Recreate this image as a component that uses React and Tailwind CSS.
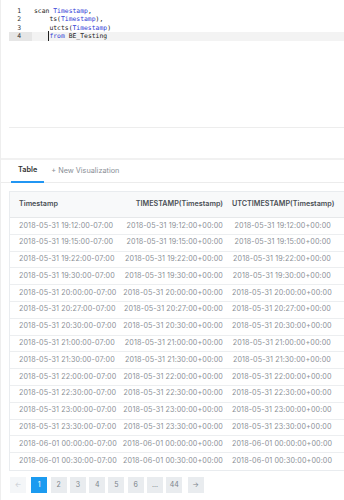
import React from "react";

const rows = [
  ["2018-05-31", "19:12:00"],
  ["2018-05-31", "19:15:00"],
  ["2018-05-31", "19:22:00"],
  ["2018-05-31", "19:30:00"],
  ["2018-05-31", "20:00:00"],
  ["2018-05-31", "20:27:00"],
  ["2018-05-31", "20:30:00"],
  ["2018-05-31", "21:00:00"],
  ["2018-05-31", "21:30:00"],
  ["2018-05-31", "22:00:00"],
  ["2018-05-31", "22:30:00"],
  ["2018-05-31", "23:00:00"],
  ["2018-05-31", "23:30:00"],
  ["2018-06-01", "00:00:00"],
  ["2018-06-01", "00:30:00"],
];

const Kw = ({ children }) => <span className="text-[#2f3bd6]">{children}</span>;

function CodeLine({ n, active, children }) {
  return (
    <div className={`flex h-[8.4px] items-center ${active ? "bg-[#f3f3f3]" : ""}`}>
      <div
        className={`w-[23px] h-full flex items-center justify-end pr-[11px] text-[#333] ${
          active ? "bg-[#e6e6e6]" : "bg-white"
        }`}
      >
        {n}
      </div>
      <div className="pl-[2px] whitespace-pre text-[#222]">{children}</div>
    </div>
  );
}

function PageBtn({ children, active, dim, className = "" }) {
  return (
    <div
      className={`w-4 h-4 flex items-center justify-center text-[7px] ${className} ${
        active
          ? "bg-[#1c9bf0] text-white"
          : dim
          ? "bg-[#f4f6f8] text-[#c5cad0]"
          : "bg-[#e9ecef] text-[#7b838b]"
      }`}
    >
      {children}
    </div>
  );
}

export default function App() {
  return (
    <div className="w-[344px] h-[500px] overflow-hidden bg-white border-l border-[#eeeeee] font-['Inter',sans-serif]">
      {/* editor */}
      <div className="h-[160px] border-b-2 border-[#f1f1f1]">
        <div className="ml-[8px] h-[128px] border-b border-[#ededed] pt-[7px] font-['DejaVu_Sans_Mono',monospace] text-[6.4px] leading-none">
          <CodeLine n={1}>
            scan <Kw>Timestamp</Kw>,
          </CodeLine>
          <CodeLine n={2}>
            {"    ts("}
            <Kw>Timestamp</Kw>),
          </CodeLine>
          <CodeLine n={3}>
            {"    utcts("}
            <Kw>Timestamp</Kw>)
          </CodeLine>
          <CodeLine n={4} active>
            {"    "}
            <span className="relative">
              <span className="absolute left-[-1px] top-[-1px] bottom-[-1px] w-px bg-[#222]" />
              <Kw>from</Kw>
            </span>{" "}
            BE_Testing
          </CodeLine>
        </div>
      </div>

      {/* tabs */}
      <div className="h-[23px] flex items-stretch pl-[10px] border-b border-[#ececec] text-[7.3px]">
        <div className="px-[7px] flex items-center font-semibold text-[#333] border-b-2 border-[#2196f3] -mb-px">
          Table
        </div>
        <div className="px-[7px] flex items-center text-[#8a8f96]">+ New Visualization</div>
      </div>

      {/* table */}
      <div className="mt-[8px] ml-[8px] w-[360px] border border-[#e9ecef] text-[7.2px]">
        <div className="flex h-[26px] items-center bg-[#f8f9fa] border-b border-[#e6e8ea] font-semibold text-[#4a4f55]">
          <div className="w-[111px] pl-[9px]">Timestamp</div>
          <div className="w-[111px] text-right pr-[9px]">TIMESTAMP(Timestamp)</div>
          <div className="w-[108px] text-right pr-[9px]">UTCTIMESTAMP(Timestamp)</div>
        </div>
        {rows.map(([d, t], i) => (
          <div
            key={i}
            className={`flex h-[16.8px] items-center text-[#8c9197] tracking-[0.1px] ${
              i < rows.length - 1 ? "border-b border-[#eceef0]" : ""
            }`}
          >
            <div className="w-[111px] pl-[9px] whitespace-nowrap">{`${d} ${t}-07:00`}</div>
            <div className="w-[111px] text-right pr-[9px] whitespace-nowrap">{`${d} ${t}+00:00`}</div>
            <div className="w-[108px] text-right pr-[9px] whitespace-nowrap">{`${d} ${t}+00:00`}</div>
          </div>
        ))}
      </div>

      {/* pagination */}
      <div className="mt-[6px] ml-[9px] flex items-center gap-[3.3px]">
        <PageBtn dim className="mr-[2px]">←</PageBtn>
        <PageBtn active>1</PageBtn>
        <PageBtn>2</PageBtn>
        <PageBtn>3</PageBtn>
        <PageBtn>4</PageBtn>
        <PageBtn>5</PageBtn>
        <PageBtn>6</PageBtn>
        <PageBtn>...</PageBtn>
        <PageBtn>44</PageBtn>
        <PageBtn className="ml-[2px]">→</PageBtn>
      </div>
    </div>
  );
}
